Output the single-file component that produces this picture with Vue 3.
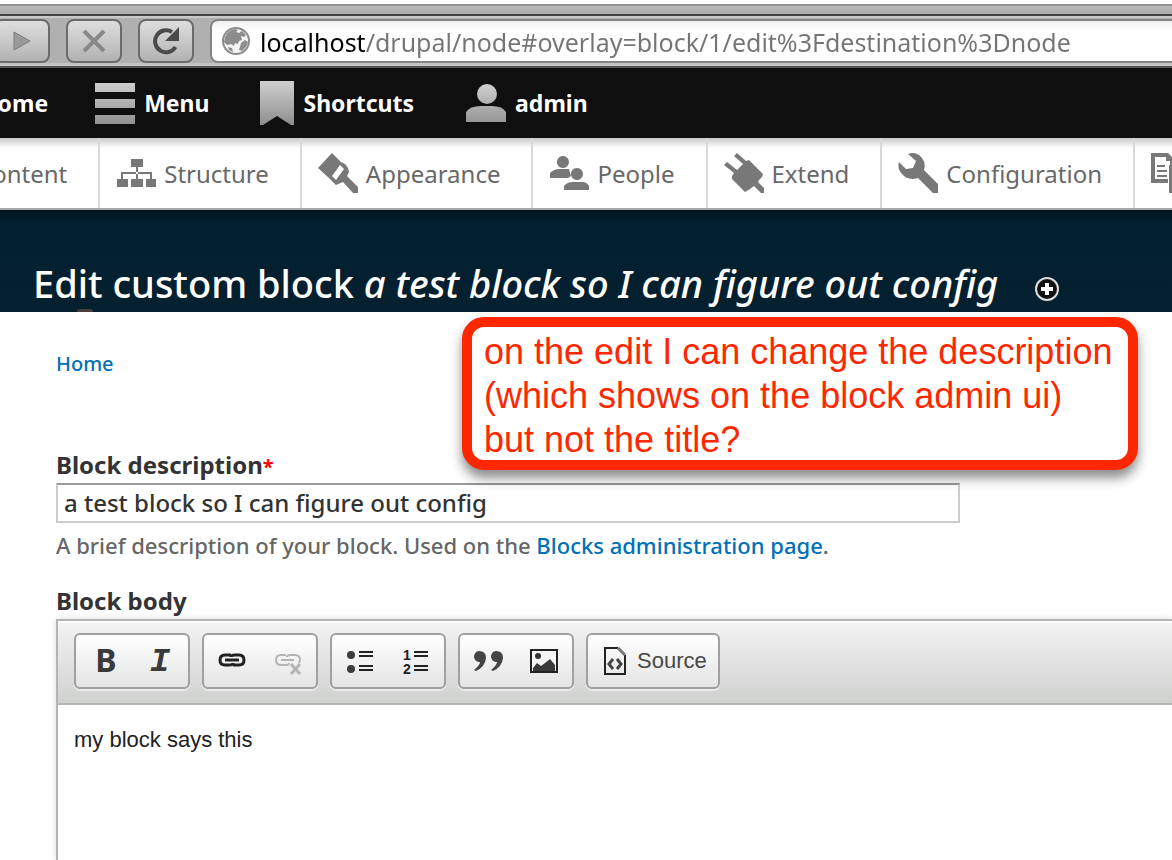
<template>
    <div class="page">
        <div class="browser-bar">
            <button class="nav-btn" type="button" aria-label="Forward">
                <svg width="20" height="24" viewBox="0 0 20 24"><path d="M2 3 L18 12 L2 21 Z" fill="#9a9a9a" stroke="#7c7c7c"/></svg>
            </button>
            <button class="nav-btn" type="button" aria-label="Stop">
                <svg width="24" height="24" viewBox="0 0 24 24"><path d="M2 2 L22 22 M22 2 L2 22" stroke="#888" stroke-width="4"/></svg>
            </button>
            <button class="nav-btn" type="button" aria-label="Reload">
                <svg width="28" height="28" viewBox="0 0 28 28">
                    <path d="M20 5 A11 11 0 1 0 23.5 20" fill="none" stroke="#4a4a4a" stroke-width="4"/>
                    <path d="M27 0 V14 H13 Z" fill="#4a4a4a"/>
                </svg>
            </button>
            <label class="address">
                <svg width="28" height="28" viewBox="0 0 28 28" aria-hidden="true">
                    <circle cx="14" cy="14" r="13" fill="#f4f4f4" stroke="#8c8c8c" stroke-width="2"/>
                    <path d="M3 10 Q6 3 13 2 L16 3 L14 5 L17 6 L20 4 L24 8 L22 10 L19 9 L20 13 L17 14 L16 17 L13 16 L12 19 L9 17 L5 18 L2 15 Z" fill="#8c8c8c"/>
                    <path d="M19 16 L23 13 L26 15 L24 20 L20 24 L17 23 L18 20 Z M6 20 L10 21 L11 25 L7 23 Z" fill="#8c8c8c"/>
                </svg>
                <input type="text" v-model="url" aria-label="Address" spellcheck="false"/>
            </label>
        </div>

        <nav class="admin-bar">
            <a href="#" class="bar-home">Home</a>
            <a href="#" class="bar-menu">
                <svg width="40" height="42" viewBox="0 0 40 42">
                    <defs>
                        <linearGradient id="metal" gradientUnits="userSpaceOnUse" x1="0" y1="0" x2="0" y2="42">
                            <stop offset="0" stop-color="#cfcfcf"/>
                            <stop offset="1" stop-color="#919191"/>
                        </linearGradient>
                    </defs>
                    <path d="M0 1 H40 V10 H0 Z M0 17 H40 V26 H0 Z M0 33 H40 V42 H0 Z" fill="url(#metal)"/>
                </svg>
                Menu
            </a>
            <a href="#" class="bar-shortcuts">
                <svg width="34" height="44" viewBox="0 0 34 44"><path d="M0 0 H34 V44 H31 L17 35 L3 44 H0 Z" fill="url(#metal)"/></svg>
                Shortcuts
            </a>
            <a href="#" class="bar-user">
                <svg width="40" height="38" viewBox="0 0 40 38">
                    <circle cx="21" cy="10" r="10" fill="url(#metal)"/>
                    <path d="M0 38 V28 Q4 22 15 22 H26 Q36 22 40 28 V38 Z" fill="url(#metal)"/>
                </svg>
                admin
            </a>
        </nav>

        <nav class="tray">
            <a v-for="item in tray" :key="item.id" href="#" class="tray-item">
                <svg width="40" height="40" viewBox="0 0 40 40" fill="#787878" fill-rule="evenodd">
                    <path v-for="(d, i) in item.paths" :key="i" :d="d"/>
                </svg>
                {{ item.name }}
            </a>
        </nav>

        <header class="overlay-head">
            <h1>Edit custom block <em>a test block so I can figure out config</em></h1>
            <button type="button" class="add-shortcut" aria-label="Add to shortcuts">
                <svg width="24" height="24" viewBox="0 0 24 24">
                    <circle cx="12" cy="12" r="11" fill="#111" stroke="#ddd" stroke-width="2"/>
                    <path d="M12 6 V18 M6 12 H18" stroke="#fff" stroke-width="4"/>
                </svg>
            </button>
        </header>

        <main class="content">
            <a href="#" class="crumb">Home</a>

            <div class="note">
                on the edit I can change the description<br>
                (which shows on the block admin ui)<br>
                but not the title?
            </div>

            <label for="info" class="field-label">Block description<span class="required">*</span></label>
            <input id="info" class="text-field" type="text" v-model="description"/>
            <p class="help">A brief description of your block. Used on the <a href="#">Blocks administration page</a>.</p>

            <label for="body" class="field-label body-label">Block body</label>
            <div class="editor">
                <div class="editor-tools">
                    <div class="group">
                        <button type="button" class="bold" aria-label="Bold">B</button>
                        <button type="button" class="italic" aria-label="Italic">I</button>
                    </div>
                    <div class="group">
                        <button type="button" aria-label="Link">
                            <svg width="30" height="28" viewBox="0 0 30 28" fill="none" stroke="#222" stroke-width="3">
                                <path d="M14 8 H8 Q3 8 3 13 T8 18 H12 Q16 18 16 16"/>
                                <path d="M16 18 H22 Q27 18 27 13 T22 8 H18 Q14 8 14 10"/>
                                <path d="M8 13 H22"/>
                            </svg>
                        </button>
                        <button type="button" aria-label="Unlink" disabled>
                            <svg width="30" height="28" viewBox="0 0 30 28" fill="none" stroke="#b4b4b4" stroke-width="3">
                                <path d="M13 8 H8 Q3 8 3 13 T8 18 H13 Q16 18 16 16 M18 8 H22 Q27 8 27 13 L26 16 M18 8 Q14 8 14 10 M8 13 H21" stroke-width="2"/>
                                <path d="M18 17 L27 27 M27 17 L18 27"/>
                            </svg>
                        </button>
                    </div>
                    <div class="group">
                        <button type="button" aria-label="Bulleted list">
                            <svg class="list-icon" width="28" height="28" viewBox="0 0 28 28">
                                <circle cx="5" cy="8" r="4" fill="#3c3c3c"/>
                                <circle cx="5" cy="22" r="4" fill="#3c3c3c"/>
                                <path d="M13 5 H27 M13 9 H27 M13 19 H27 M13 23 H27" stroke="#222" stroke-width="2"/>
                            </svg>
                        </button>
                        <button type="button" aria-label="Numbered list">
                            <svg class="list-icon" width="28" height="32" viewBox="0 -2 28 32">
                                <text x="1" y="13">1</text>
                                <text x="1" y="27">2</text>
                                <path d="M12 5 H26 M12 9 H26 M12 19 H26 M12 23 H26" stroke="#222" stroke-width="2"/>
                            </svg>
                        </button>
                    </div>
                    <div class="group">
                        <button type="button" aria-label="Block quote">
                            <svg width="30" height="28" viewBox="0 0 30 28" fill="#444">
                                <path d="M6 4 Q13 4 13 11 Q12 20 3 24 L1 23 Q7 18 7 15 A5 5 0 0 1 6 4 Z"/>
                                <path d="M23 4 Q30 4 30 11 Q29 20 20 24 L18 23 Q24 18 24 15 A5 5 0 0 1 23 4 Z"/>
                            </svg>
                        </button>
                        <button type="button" aria-label="Image">
                            <svg width="28" height="26" viewBox="0 0 28 26">
                                <path d="M1 2 H27 V24 H1 Z" fill="#f6f6f6" stroke="#222" stroke-width="2"/>
                                <circle cx="8" cy="8" r="3" fill="#333"/>
                                <path d="M3 23 V20 L7 15 L11 18 L15 15 L20 11 L25 17 V23 Z" fill="#3a3a3a"/>
                            </svg>
                        </button>
                    </div>
                    <div class="group">
                        <button type="button" class="source">
                            <svg width="24" height="30" viewBox="0 0 24 30" fill="none" stroke="#222">
                                <path d="M15 2 H2 V28 H22 V9" stroke-width="2"/>
                                <path d="M15 2 L22 9" stroke="#777" stroke-width="3"/>
                                <path d="M10 13 L6 18 L10 23 M14 13 L18 18 L14 23" stroke="#444" stroke-width="3"/>
                            </svg>
                            Source
                        </button>
                    </div>
                </div>
                <textarea id="body" v-model="body" spellcheck="false"></textarea>
            </div>
        </main>
    </div>
</template>
<script setup>
import { ref } from "vue"

const url = ref("localhost/drupal/node#overlay=block/1/edit%3Fdestination%3Dnode");
const description = ref("a test block so I can figure out config");
const body = ref("my block says this");

const tray = [
    { id: 1, name: "Content", paths: ["M4 0 H24 L32 8 V40 H4 Z"] },
    {
        id: 2,
        name: "Structure",
        paths: [
            "M15 6 H27 V14 H15 Z M1 26 H12 V34 H1 Z M15 26 H27 V34 H15 Z M30 26 H40 V34 H30 Z",
            "M20 14 H22 V26 H20 Z M5 19 H36 V26 H34 V21 H7 V26 H5 Z"
        ]
    },
    {
        id: 3,
        name: "Appearance",
        paths: [
            "M14 0 L23 9 L27 11 L30 15 L31 19 L29 23 L40 34 V40 H35 L25 29 L18 32 L12 26 L0 15 Z M22 12 L14 23 L18 27 L26 16 Z"
        ]
    },
    {
        id: 4,
        name: "People",
        paths: [
            "M14 3 A6 6 0 1 1 13.9 3 Z M1 25 V20 Q5 16 10 16 H20 L22 23 L19 25 Z",
            "M28 15 A6 6 0 1 1 27.9 15 Z M15 37 V33 Q18 29 24 29 H33 Q38 29 40 33 V37 Z"
        ]
    },
    {
        id: 5,
        name: "Extend",
        paths: [
            "M13 0 L22 8 L25 7 L39 21 L38 24 L35 27 L34 29 L40 35 V40 H37 L30 33 L26 36 L21 39 L8 26 V23 L10 20 L0 12 L3 9 L13 17 L19 11 L10 3 Z"
        ]
    },
    {
        id: 6,
        name: "Configuration",
        paths: [
            "M10 1 Q18 -2 24 5 Q28 10 26 17 L40 31 V40 H35 L20 25 Q10 28 4 21 Q-1 16 1 9 L8 16 L15 15 L18 8 Z"
        ]
    },
    {
        id: 7,
        name: "",
        paths: [
            "M0 0 H17 L23 6 V12 H19 V8 H15 V4 H4 V26 H17 V30 H0 Z M6 12 H14 V14 H6 Z M6 17 H16 V19 H6 Z M6 22 H16 V24 H6 Z",
            "M18 12 H36 V40 H18 Z"
        ]
    }
];
</script>
<style>
body {
    margin: 0;
    background: #fff;
}
</style>
<style scoped>
* {
    box-sizing: border-box;
}
.page {
    display: flex;
    flex-direction: column;
    min-height: 100vh;
    overflow: hidden;
    font-family: "Noto Sans", "Open Sans", sans-serif;
    font-weight: 500;
    color: #333;
}
a {
    color: #0071b8;
    text-decoration: none;
}
button {
    padding: 0;
    border: 0;
    background: none;
    font: inherit;
}
svg {
    flex: none;
    display: block;
}

.browser-bar {
    display: flex;
    height: 68px;
    padding-top: 19px;
    border-bottom: 2px solid #555;
    background: linear-gradient(#fff 4px, #919191 4px 6px, #bbb 6px, #adadad 14px, #444 14px 16px, #c9c9c9 16px 18px, #b0b0b0 18px 63px, #c4c4c4 63px);
}
.nav-btn {
    display: flex;
    flex: none;
    align-items: center;
    justify-content: center;
    width: 56px;
    height: 44px;
    margin-right: 16px;
    border: 2px solid #6b6b6b;
    border-radius: 8px;
    background: linear-gradient(#dedede, #b2b2b2);
}
.nav-btn:first-child {
    margin-left: -6px;
}
.address {
    display: flex;
    flex: 1;
    align-items: center;
    gap: 10px;
    height: 44px;
    margin-right: -10px;
    padding-left: 10px;
    border: 2px solid #858585;
    border-radius: 8px;
    background: linear-gradient(#f0f0f0, #fff 10px);
}
.address input {
    flex: 1;
    min-width: 0;
    padding: 2px 0 0;
    border: 0;
    outline: 0;
    font: 25px/36px "Noto Sans", "Open Sans", sans-serif;
    color: transparent;
    background: linear-gradient(90deg, #000 106px, #757575 106px);
    background-clip: text;
}

.admin-bar {
    display: flex;
    align-items: center;
    height: 70px;
    background: #0f0f0f;
}
.admin-bar a {
    display: flex;
    align-items: center;
    gap: 9px;
    color: #fff;
    font-size: 23px;
    font-weight: bold;
}
.admin-bar .bar-home {
    margin-left: -20px;
}
.bar-menu {
    margin-left: 47px;
}
.bar-shortcuts {
    margin-left: 51px;
}
.bar-user {
    margin-left: 52px;
}

.tray {
    display: flex;
    height: 72px;
    border-bottom: 2px solid #a6a6a6;
    margin-left: -87px;
    background: linear-gradient(#c8c8c8, #fff 10px);
}
.tray-item {
    display: flex;
    flex: none;
    align-items: center;
    gap: 8px;
    padding: 0 31px 0 16px;
    border-right: 2px solid #d9d9d9;
    color: #686868;
    font-size: 24px;
    font-weight: normal;
}

.overlay-head {
    position: relative;
    display: flex;
    align-items: center;
    gap: 37px;
    height: 102px;
    padding: 44px 0 0 33px;
    background: linear-gradient(#001420, #022032 14px, #05202f);
}
.overlay-head::after {
    content: "";
    position: absolute;
    left: 77px;
    bottom: 0;
    width: 16px;
    height: 3px;
    border-radius: 8px 8px 0 0;
    background: #4b3c40;
}
h1 {
    margin: 0;
    color: #fff;
    font-size: 38px;
    font-weight: 500;
    line-height: 56px;
    white-space: nowrap;
}
.add-shortcut {
    margin-top: 12px;
}

.content {
    position: relative;
    display: flex;
    flex: 1;
    flex-direction: column;
    align-items: flex-start;
    padding: 36px 0 0 56px;
}
.crumb {
    font-size: 20px;
    line-height: 32px;
}
.note {
    position: absolute;
    top: 5px;
    left: 462px;
    height: 153px;
    padding: 3px 16px 0 12px;
    border: 10px solid #ff2700;
    border-radius: 22px;
    background: #fff;
    box-shadow: 0 8px 12px rgba(0, 0, 0, 0.45);
    color: #ff2700;
    font: 36px/44px "Liberation Sans", Arial, sans-serif;
    white-space: nowrap;
}
.field-label {
    margin-top: 69px;
    font-size: 24px;
    font-weight: bold;
    line-height: 32px;
}
.required {
    color: #f00;
    font-size: 20px;
}
.text-field {
    width: 904px;
    max-width: 100%;
    height: 40px;
    padding: 0 6px 2px;
    border: 2px solid #ccc;
    border-top-color: #999;
    outline: 0;
    color: #333;
    font: 500 24px/34px "Noto Sans", "Open Sans", sans-serif;
}
.help {
    margin: 6px 0 0;
    color: #666;
    font-size: 22px;
    line-height: 32px;
}
.body-label {
    margin-top: 24px;
}
.editor {
    display: flex;
    flex: 1;
    flex-direction: column;
    width: 100%;
    margin-top: 2px;
    border-top: 2px solid #b4b4b4;
    border-left: 2px solid #b4b4b4;
    box-shadow: 0 0 6px rgba(0, 0, 0, 0.15);
}
.editor-tools {
    display: flex;
    gap: 12px;
    height: 84px;
    padding: 12px 16px;
    border-bottom: 2px solid #b4b4b4;
    background: linear-gradient(#fff 2px, #f3f3f3 2px, #cfd1cf);
}
.group {
    display: flex;
    height: 56px;
    border: 2px solid #a0a0a0;
    border-radius: 6px;
    background: linear-gradient(#fff, #e4e4e4);
    box-shadow: 0 2px 0 rgba(255, 255, 255, 0.5);
}
.group button {
    display: flex;
    align-items: center;
    justify-content: center;
    width: 56px;
    color: #3a3a3a;
}
.group .bold {
    padding: 0 0 4px 4px;
    font-size: 32px;
    font-weight: bold;
}
.group .italic {
    padding-top: 2px;
    font: italic bold 34px "Liberation Mono", monospace;
}
.list-icon text {
    font: bold 14px "Liberation Sans", Arial, sans-serif;
    fill: #222;
}
.group .source {
    gap: 10px;
    width: auto;
    padding: 0 11px 0 15px;
    color: #484848;
    font: 22px "Liberation Sans", Arial, sans-serif;
}
textarea {
    flex: 1;
    min-height: 154px;
    padding: 20px 16px;
    border: 0;
    outline: 0;
    resize: none;
    color: #222;
    background: #fff;
    font: 22px/30px "Liberation Sans", Arial, sans-serif;
}
</style>
